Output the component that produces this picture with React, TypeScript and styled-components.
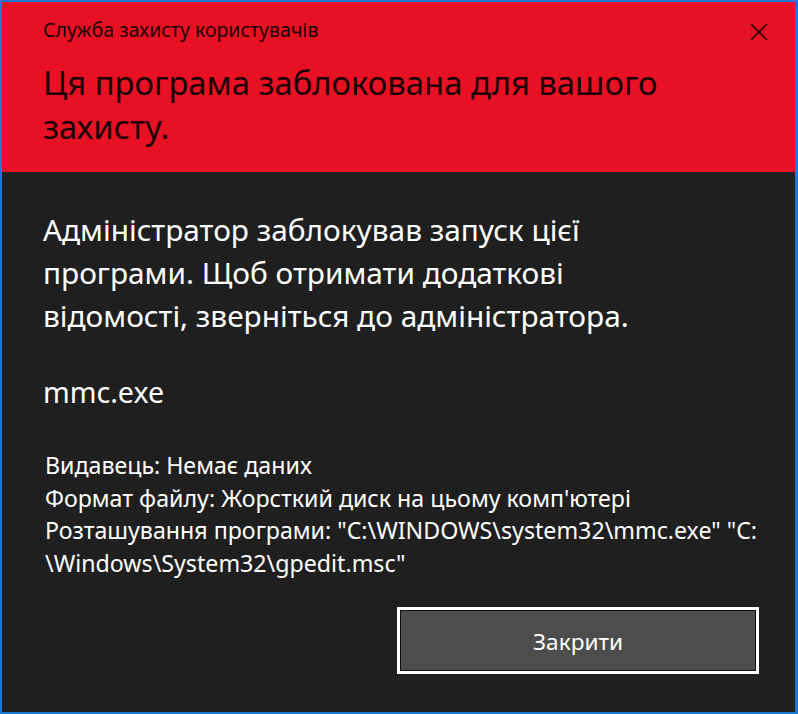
import styled, {createGlobalStyle} from "styled-components";

const GlobalStyle = createGlobalStyle`
  html, body {
    margin: 0;
    padding: 0;
    background: #1f1f1f;
  }
  body {
    font-family: "Noto Sans", "Open Sans", sans-serif;
  }
`;

const Window = styled.div`
  box-sizing: border-box;
  width: 798px;
  height: 714px;
  border: 2px solid #1979d0;
  border-right-width: 3px;
  background: #1f1f1f;
  display: flex;
  flex-direction: column;
`;

const Header = styled.header`
  background: #e81123;
  height: 170px;
  box-sizing: border-box;
  padding: 14px 20px 0 41px;
  color: #1a0003;
  position: relative;
`;

const Caption = styled.div`
  font-size: 19.5px;
  line-height: 28px;
`;

const Title = styled.h1`
  margin: 17px 0 0;
  font-size: 32.8px;
  font-weight: 400;
  line-height: 44px;
`;

const CloseButton = styled.button`
  position: absolute;
  top: 12px;
  right: 18px;
  width: 36px;
  height: 36px;
  border: 0;
  background: transparent;
  padding: 0;
  display: flex;
  align-items: center;
  justify-content: center;
  cursor: pointer;
`;

const Content = styled.main`
  flex: 1;
  padding: 36px 20px 0 41px;
  color: #ffffff;
  display: flex;
  flex-direction: column;
`;

const Message = styled.p`
  margin: 0;
  font-size: 29.8px;
  line-height: 43px;
`;

const FileName = styled.p`
  margin: 33px 0 0;
  font-size: 28.6px;
  line-height: 43px;
`;

const Details = styled.div`
  margin: 36px 0 0 2px;
  font-size: 23.2px;
  line-height: 32.6px;
  white-space: nowrap;
`;

const Footer = styled.div`
  display: flex;
  justify-content: flex-end;
  margin-top: 28px;
  padding-right: 16px;
`;

const CloseAction = styled.button`
  width: 362px;
  height: 67px;
  box-sizing: border-box;
  border: 3px solid #ffffff;
  box-shadow: inset 0 0 0 1px #111111;
  background: #4d4d4d;
  color: #ffffff;
  font-family: inherit;
  font-size: 22.6px;
  padding-top: 2px;
  cursor: pointer;
`;

export default function App() {
  return (
    <>
      <GlobalStyle />
      <Window>
        <Header>
          <Caption>Служба захисту користувачів</Caption>
          <Title>
            Ця програма заблокована для вашого
            <br />
            захисту.
          </Title>
          <CloseButton aria-label="Закрити">
            <svg width="18" height="18" viewBox="0 0 18 18">
              <path d="M1 1 L17 17 M17 1 L1 17" stroke="#2a0005" strokeWidth="1.6" />
            </svg>
          </CloseButton>
        </Header>
        <Content>
          <Message>
            Адміністратор заблокував запуск цієї
            <br />
            програми. Щоб отримати додаткові
            <br />
            відомості, зверніться до адміністратора.
          </Message>
          <FileName>mmc.exe</FileName>
          <Details>
            Видавець: Немає даних
            <br />
            Формат файлу: Жорсткий диск на цьому комп'ютері
            <br />
            Розташування програми: "C:\WINDOWS\system32\mmc.exe" "C:
            <br />
            \Windows\System32\gpedit.msc"
          </Details>
          <Footer>
            <CloseAction>Закрити</CloseAction>
          </Footer>
        </Content>
      </Window>
    </>
  );
}
